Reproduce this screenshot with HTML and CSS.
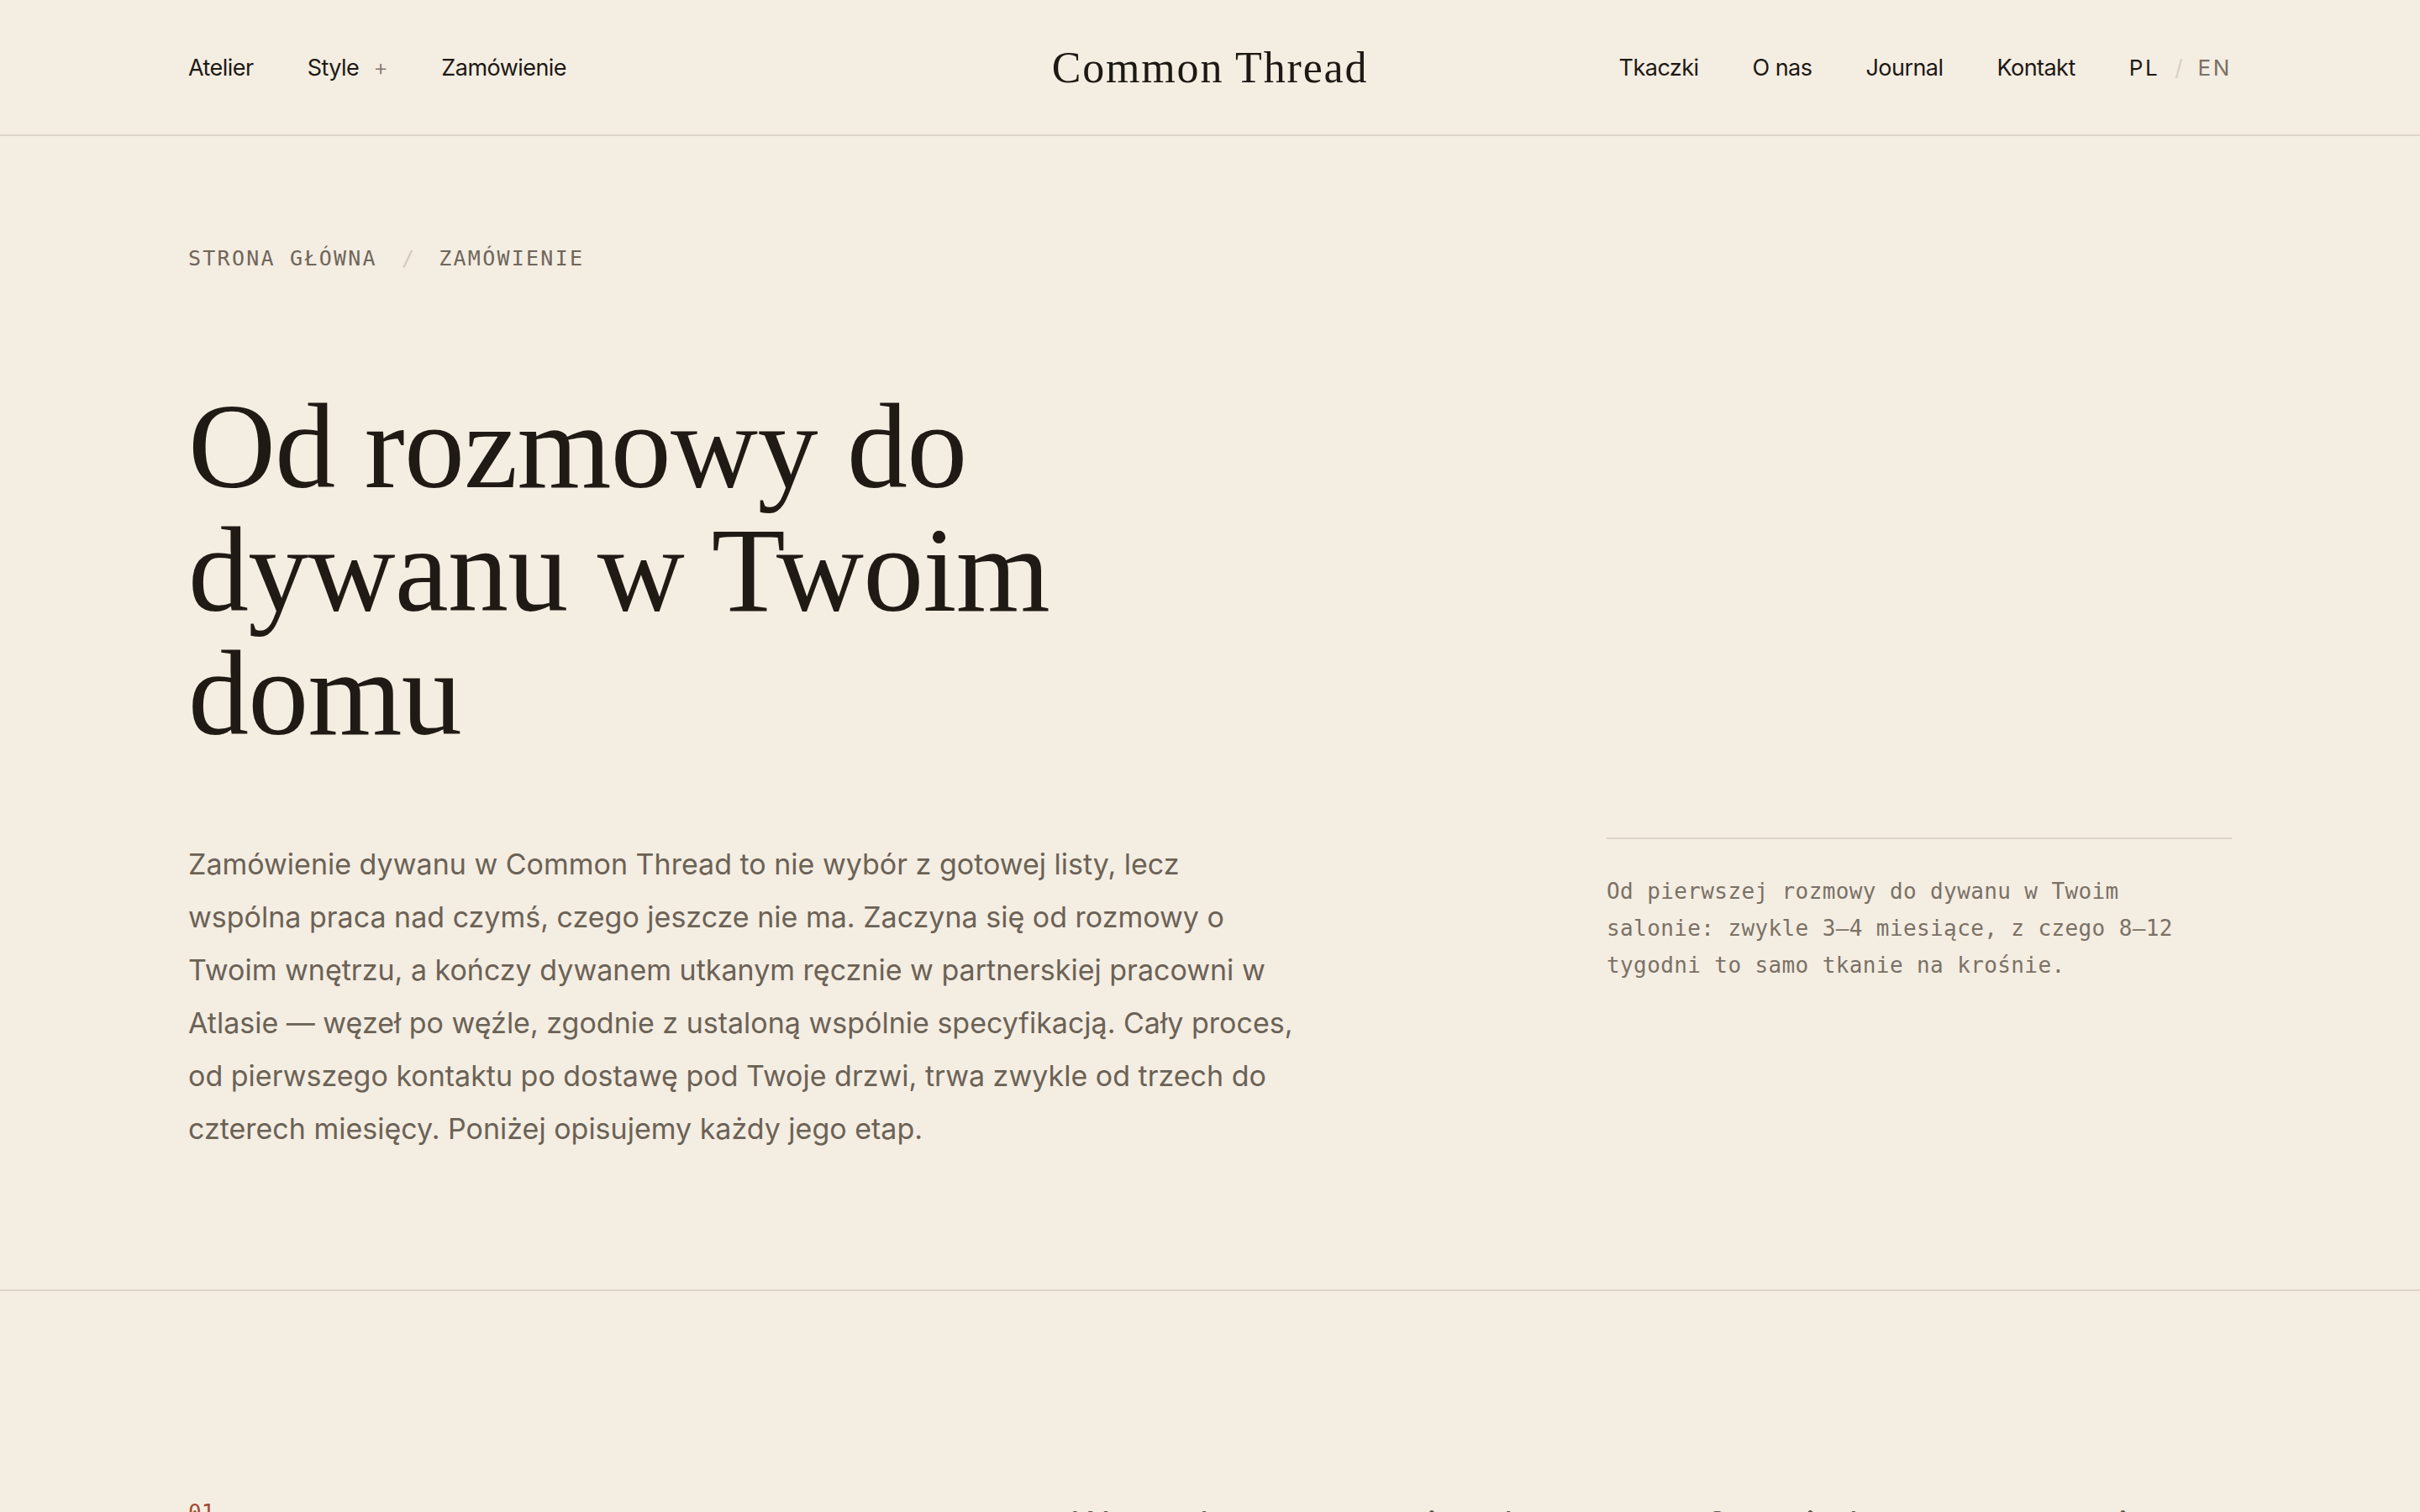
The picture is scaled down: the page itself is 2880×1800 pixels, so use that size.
FILE: index.html
```html
<!DOCTYPE html>
<html lang="pl">
<head>
<meta charset="utf-8">
<meta name="viewport" content="width=device-width, initial-scale=1">
<title>Zamówienie — Common Thread</title>
<link rel="stylesheet" href="styles.css">
</head>
<body>
<header class="site-header">
  <nav class="nav nav-left">
    <a class="nav-link" href="#">Atelier</a>
    <a class="nav-link" href="#">Style <span class="nav-plus">+</span></a>
    <a class="nav-link" href="#">Zamówienie</a>
  </nav>
  <a class="logo" href="#">Common Thread</a>
  <nav class="nav nav-right">
    <a class="nav-link" href="#">Tkaczki</a>
    <a class="nav-link" href="#">O nas</a>
    <a class="nav-link" href="#">Journal</a>
    <a class="nav-link" href="#">Kontakt</a>
    <div class="lang">
      <a class="lang-item lang-active" href="#">PL</a>
      <span class="lang-sep">/</span>
      <a class="lang-item" href="#">EN</a>
    </div>
  </nav>
</header>

<main>
  <section class="hero">
    <div class="breadcrumb">
      <a href="#">Strona główna</a>
      <span class="crumb-sep">/</span>
      <span>Zamówienie</span>
    </div>
    <h1 class="hero-title">Od rozmowy do dywanu w Twoim domu</h1>
    <div class="hero-body">
      <p class="lead">Zamówienie dywanu w Common Thread to nie wybór z gotowej listy, lecz wspólna praca nad czymś, czego jeszcze nie ma. Zaczyna się od rozmowy o Twoim wnętrzu, a kończy dywanem utkanym ręcznie w partnerskiej pracowni w Atlasie — węzeł po węźle, zgodnie z ustaloną wspólnie specyfikacją. Cały proces, od pierwszego kontaktu po dostawę pod Twoje drzwi, trwa zwykle od trzech do czterech miesięcy. Poniżej opisujemy każdy jego etap.</p>
      <aside class="hero-note">
        <p>Od pierwszej rozmowy do dywanu w Twoim salonie: zwykle 3–4 miesiące, z czego 8–12 tygodni to samo tkanie na krośnie.</p>
      </aside>
    </div>
  </section>

  <section class="step">
    <div class="step-num">01</div>
    <div class="step-body">
      <p class="step-text">Wszystko zaczyna się od rozmowy. Opowiadasz nam o swoim wnętrzu, świetle i o tym, jak żyjesz na co dzień.</p>
    </div>
  </section>
</main>
</body>
</html>
```
FILE: styles.css
```css
* {
  box-sizing: border-box;
}

html, body {
  margin: 0;
  padding: 0;
}

body {
  background: #f4ede2;
  color: #1d1914;
  font-family: Inter, "Noto Sans", sans-serif;
  -webkit-font-smoothing: antialiased;
}

a {
  color: inherit;
  text-decoration: none;
}

/* Header */
.site-header {
  height: 162px;
  padding: 0 224px;
  border-bottom: 2px solid #ddd5c8;
  display: grid;
  grid-template-columns: 1fr auto 1fr;
  align-items: center;
}

.nav {
  display: flex;
  align-items: center;
  gap: 64px;
  font-size: 27px;
  letter-spacing: -0.02em;
}

.nav-right {
  justify-self: end;
}

.nav-link {
  color: #1d1914;
}

.nav-plus {
  color: #7d7469;
  margin-left: 10px;
  font-weight: 300;
}

.logo {
  font-family: "Liberation Serif", "Times New Roman", serif;
  font-size: 52px;
  letter-spacing: 0.035em;
  color: #1d1914;
}

.lang {
  display: flex;
  align-items: center;
  gap: 18px;
  font-size: 26px;
  letter-spacing: 0.1em;
}

.lang-item {
  color: #7a7166;
}

.lang-active {
  color: #1d1914;
}

.lang-sep {
  color: #d8cfc2;
  letter-spacing: 0;
}

/* Hero */
.hero {
  padding: 126px 224px 160px;
  border-bottom: 2px solid #ddd5c8;
}

.breadcrumb {
  display: flex;
  align-items: center;
  font-family: "DejaVu Sans Mono", "Liberation Mono", monospace;
  font-size: 25px;
  line-height: 40px;
  letter-spacing: 0.09em;
  text-transform: uppercase;
  color: #6f665b;
}

.crumb-sep {
  color: #d3cabd;
  margin: 0 27px 0 29px;
}

.hero-title {
  margin: 130px 0 98px;
  max-width: 1240px;
  font-family: "Liberation Serif", "Times New Roman", serif;
  font-weight: 400;
  font-size: 144px;
  line-height: 147px;
  letter-spacing: -0.005em;
  color: #1f1a14;
}

.hero-body {
  display: grid;
  grid-template-columns: 1fr 744px;
  align-items: start;
}

.lead {
  margin: 0;
  max-width: 1320px;
  font-size: 34px;
  line-height: 63px;
  color: #6b6256;
}

.hero-note {
  border-top: 2px solid #ddd5c8;
  padding-top: 40px;
}

.hero-note p {
  margin: 0;
  font-family: "DejaVu Sans Mono", "Liberation Mono", monospace;
  font-size: 26px;
  line-height: 44px;
  letter-spacing: 0.015em;
  color: #7a7166;
}

/* Steps */
.step {
  padding: 244px 224px 160px;
  display: grid;
  grid-template-columns: 1052px 1fr;
}

.step-num {
  font-family: "DejaVu Sans Mono", "Liberation Mono", monospace;
  font-size: 26px;
  line-height: 40px;
  color: #a24a30;
}

.step-text {
  margin: 0;
  max-width: 1380px;
  font-size: 44px;
  line-height: 68px;
  color: #5e554b;
}
```
